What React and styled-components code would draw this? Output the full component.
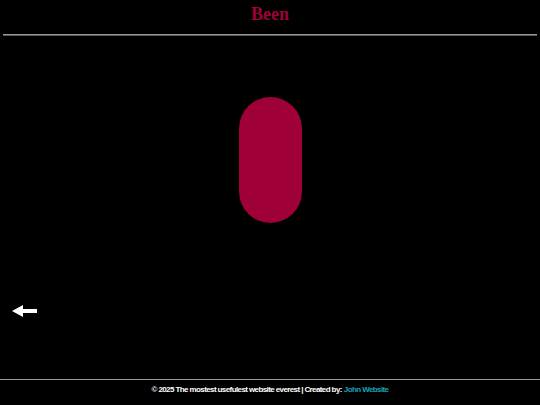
import React from 'react';
import styled, { createGlobalStyle } from 'styled-components';

const GlobalStyle = createGlobalStyle`
  html, body {
    margin: 0;
    padding: 0;
    background: #000;
    height: 100%;
  }
  #root {
    height: 100%;
  }
`;

const Page = styled.div`
  display: flex;
  flex-direction: column;
  height: 100vh;
  background: #000;
  color: #fff;
`;

const Header = styled.header`
  padding: 0 3px;
`;

const Title = styled.h1`
  margin: 0;
  padding-top: 4px;
  height: 34px;
  box-sizing: border-box;
  text-align: center;
  font-family: "Liberation Serif", serif;
  font-size: 18px;
  font-weight: bold;
  color: #9e0037;
`;

const Rule = styled.hr`
  margin: 0;
  border: none;
  border-top: 1px solid #9a9a9a;
  border-bottom: 1px solid #555;
`;

const Main = styled.main`
  flex: 1;
  position: relative;
  display: flex;
  justify-content: center;
  padding-top: 61px;
`;

const Pill = styled.div`
  width: 63px;
  height: 126px;
  border-radius: 32px;
  background: #9e0037;
`;

const BackButton = styled.button`
  position: absolute;
  left: 12px;
  top: 268px;
  background: none;
  border: none;
  padding: 0;
  cursor: pointer;
  display: flex;
`;

const Footer = styled.footer`
  border-top: 1px solid #9a9a9a;
  height: 26px;
  box-sizing: border-box;
  padding-top: 5px;
  display: flex;
  align-items: flex-start;
  justify-content: center;
  font-family: "Liberation Sans", Arial, sans-serif;
  font-size: 8px;
  letter-spacing: -0.6px;
  font-weight: bold;
  color: #fff;
`;

const FooterLink = styled.a`
  color: #17a2b8;
  text-decoration: none;
  margin-left: 2px;
`;

export default function App() {
  return (
    <>
      <GlobalStyle />
      <Page>
        <Header>
          <Title>Been</Title>
          <Rule />
        </Header>
        <Main>
          <Pill />
          <BackButton aria-label="Back">
            <svg width="26" height="14" viewBox="0 0 26 14">
              <polygon points="0,7 11,1 11,5 25,5 25,9 11,9 11,13" fill="#fff" />
            </svg>
          </BackButton>
        </Main>
        <Footer>
          © 2025 The mostest usefulest website everest | Created by:
          <FooterLink href="#">John Website</FooterLink>
        </Footer>
      </Page>
    </>
  );
}
